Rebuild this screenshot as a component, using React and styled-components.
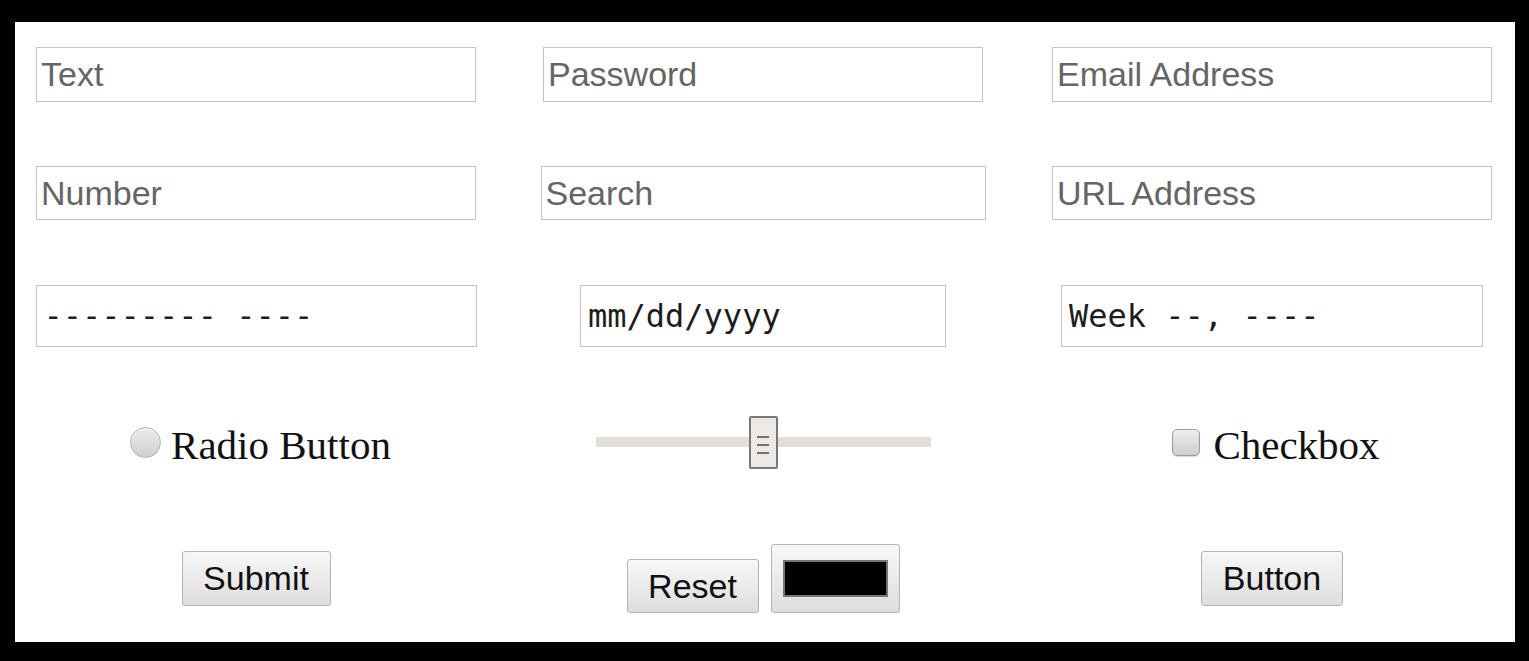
import React from "react";
import styled, { createGlobalStyle } from "styled-components";

const GlobalStyle = createGlobalStyle`
  * {
    box-sizing: border-box;
  }
  html,
  body {
    margin: 0;
    background: #000;
  }
  body {
    padding: 22px 14px 19px 15px;
  }
`;

const Panel = styled.form`
  width: 1500px;
  height: 620px;
  background: #fff;
  display: flex;
  flex-direction: column;
`;

const Row = styled.div`
  display: grid;
  grid-template-columns: 482px 532px 486px;
  align-items: center;
  justify-items: center;
  height: ${p => p.$h}px;
  margin-top: ${p => p.$top}px;
`;

const Field = styled.input`
  width: ${p => p.$w || 440}px;
  height: ${p => p.$h || 55}px;
  margin: 0;
  padding: 0 4px;
  border: 1px solid #c3c3c3;
  border-radius: 0;
  background: #fff;
  font-family: "Liberation Sans", Arial, sans-serif;
  font-size: 34px;
  color: #333;
  outline: none;

  &::placeholder {
    color: #656565;
  }
`;

const MonoField = styled(Field)`
  height: 62px;
  padding: 0 7px;
  font-family: "DejaVu Sans Mono", "Liberation Mono", monospace;
  font-size: 32px;
  color: #1c1c1c;
`;

const Choice = styled.label`
  display: flex;
  align-items: center;
  gap: ${p => p.$gap}px;
  margin-left: ${p => p.$shift || 0}px;
  font-family: "Liberation Serif", "Times New Roman", serif;
  font-size: 41px;
  color: #111;

  span {
    padding-top: 6px;
  }
`;

const Radio = styled.input.attrs({ type: "radio" })`
  appearance: none;
  -webkit-appearance: none;
  width: 31px;
  height: 31px;
  margin: 0;
  border: 1px solid #b0b0b0;
  border-radius: 50%;
  background: linear-gradient(#ececec, #cfcfcf);
  box-shadow: inset 0 1px 1px #fafafa;
`;

const Checkbox = styled.input.attrs({ type: "checkbox" })`
  appearance: none;
  -webkit-appearance: none;
  width: 28px;
  height: 27px;
  margin: 0;
  border: 1px solid #9c9c9c;
  border-radius: 5px;
  background: linear-gradient(#eeeeee, #cdcdcd);
  box-shadow: 0 1px 1px rgba(0, 0, 0, 0.15);
`;

const Slider = styled.input.attrs({ type: "range" })`
  -webkit-appearance: none;
  appearance: none;
  width: 335px;
  height: 53px;
  margin: 0;
  background: transparent;

  &::-webkit-slider-runnable-track {
    height: 10px;
    border: none;
    background: #e3dfd8;
  }

  &::-webkit-slider-thumb {
    -webkit-appearance: none;
    width: 29px;
    height: 53px;
    margin-top: -21.5px;
    border: 2px solid #777;
    border-radius: 2px;
    background:
      linear-gradient(#707070, #707070) center 18px / 12px 2px no-repeat,
      linear-gradient(#707070, #707070) center 26px / 12px 2px no-repeat,
      linear-gradient(#707070, #707070) center 34px / 12px 2px no-repeat,
      #ece9e6;
  }
`;

const Button = styled.button`
  width: ${p => p.$w}px;
  height: ${p => p.$h || 55}px;
  margin: 0;
  padding: 0;
  border: 1px solid #b4b4b4;
  border-radius: 3px;
  background: linear-gradient(#f8f8f8, #dddddd);
  font-family: "Liberation Sans", Arial, sans-serif;
  font-size: 34px;
  color: #111;
`;

const ButtonGroup = styled.div`
  display: flex;
  align-items: flex-end;
  gap: 12px;
`;

const ColorWell = styled.input.attrs({ type: "color" })`
  -webkit-appearance: none;
  appearance: none;
  width: 129px;
  height: 69px;
  margin: 0;
  padding: 0;
  border: 1px solid #b4b4b4;
  border-radius: 3px;
  background: linear-gradient(#f8f8f8, #dddddd);

  &::-webkit-color-swatch-wrapper {
    padding: 15px 11px;
  }
  &::-webkit-color-swatch {
    border: 2px solid #767676;
    border-radius: 0;
  }
`;

const App = () => (
  <>
    <GlobalStyle />
    <Panel onSubmit={e => e.preventDefault()}>
      <Row $top={25} $h={55}>
        <Field type="text" placeholder="Text" />
        <Field type="password" placeholder="Password" />
        <Field type="email" placeholder="Email Address" />
      </Row>

      <Row $top={64} $h={54}>
        <Field type="number" placeholder="Number" $h={54} />
        <Field type="search" placeholder="Search" $w={445} $h={54} />
        <Field type="url" placeholder="URL Address" $h={54} />
      </Row>

      <Row $top={65} $h={62}>
        <MonoField readOnly value="--------- ----" $w={441} />
        <MonoField readOnly value="mm/dd/yyyy" $w={366} />
        <MonoField readOnly value="Week --, ----" $w={422} />
      </Row>

      <Row $top={68} $h={53}>
        <Choice $gap={10} $shift={9}>
          <Radio name="choice" />
          <span>Radio Button</span>
        </Choice>
        <Slider defaultValue={50} min={0} max={100} />
        <Choice $gap={13} $shift={8}>
          <Checkbox />
          <span>Checkbox</span>
        </Choice>
      </Row>

      <Row $top={76} $h={69}>
        <Button type="submit" $w={149}>Submit</Button>
        <ButtonGroup>
          <Button type="reset" $w={132} $h={54}>Reset</Button>
          <ColorWell defaultValue="#000000" />
        </ButtonGroup>
        <Button type="button" $w={142}>Button</Button>
      </Row>
    </Panel>
  </>
);

export default App;
